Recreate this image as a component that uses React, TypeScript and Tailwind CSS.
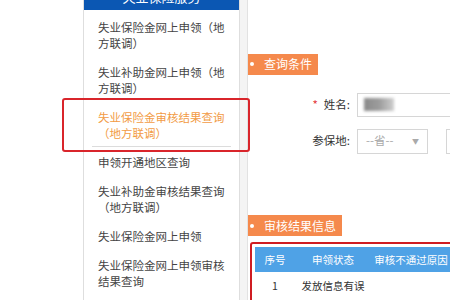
import React from 'react';

const menu = [
  '失业保险金网上申领（地方联调）',
  '失业补助金网上申领（地方联调）',
  '失业保险金审核结果查询（地方联调）',
  '申领开通地区查询',
  '失业补助金审核结果查询（地方联调）',
  '失业保险金网上申领',
  '失业保险金网上申领审核结果查询',
];

// orange section ribbon with the little fold under its left edge
function Ribbon({ label }: { label: string }) {
  return (
    <div className="relative ml-[-6px] inline-flex h-[21px] items-center bg-[#f5894c] pl-[8px] pr-[6px] text-[12px] text-white">
      <span className="h-[4px] w-[4px] rounded-full bg-white" />
      <span className="ml-[10px] leading-none">{label}</span>
      <span className="absolute left-0 top-full h-0 w-0 border-l-[6px] border-t-[5px] border-l-transparent border-t-[#c0683a]" />
    </div>
  );
}

export default function App() {
  return (
    <div
      className="relative flex h-[300px] w-[450px] overflow-hidden bg-white text-[#444]"
      style={{ fontFamily: '"Noto Sans CJK SC", "Noto Sans", sans-serif' }}
    >
      <div className="w-[83px] shrink-0 bg-white" />

      <aside className="w-[157px] shrink-0 border-x border-[#dedede] bg-white">
        {/* header is scrolled mostly out of view, only the glyph feet show */}
        <div className="h-[10px] overflow-hidden bg-[#0b57b3] text-center text-[13px] leading-[16px] text-white">
          <div className="mt-[-11px]">失业保险服务</div>
        </div>
        <ul className="mt-[2px]">
          {menu.map((item, i) => (
            <li key={item} className="text-[11.5px] leading-[16px]">
              <div
                className={
                  'pl-[14px] pr-[12px] pt-[7px] ' +
                  (i === 2 ? 'pb-[5px] text-[#f29b45]' : 'pb-[6px]')
                }
              >
                {item}
              </div>
              {i === 2 && <div className="mx-[8px] h-px bg-[#dcdcdc]" />}
            </li>
          ))}
        </ul>
      </aside>

      <div className="w-[7px] shrink-0 bg-[#f4f4f4]" />

      <main className="min-w-0 flex-1 overflow-hidden border-l border-[#e2e2e2] pt-[47px] text-[#333]">
        <Ribbon label="查询条件" />

        <div className="mt-[18px] flex h-[24px] items-center text-[11.5px]">
          <div className="w-[102px] shrink-0 text-right">
            <span className="mr-[6px] text-[#e4393c]">*</span>姓名:
          </div>
          <div className="ml-[7px] flex h-[24px] w-[140px] shrink-0 items-center border border-[#d6d6d6] pl-[6px]">
            <div className="h-[13px] w-[30px] bg-linear-to-r from-[#8a8a8a] via-[#9c9c9c] to-[#cfcfcf] blur-[1.5px]" />
          </div>
        </div>

        <div className="mt-[12px] flex h-[25px] items-center text-[11.5px]">
          <div className="w-[102px] shrink-0 text-right">参保地:</div>
          <div className="ml-[7px] flex h-[25px] w-[71px] shrink-0 items-center justify-between border border-[#d6d6d6] pl-[8px] pr-[8px] text-[#aaa]">
            <span>--省--</span>
            <span className="text-[7px]">▼</span>
          </div>
          <div className="ml-[18px] h-[25px] w-[60px] shrink-0 border border-[#d6d6d6]" />
        </div>

        <div className="mt-[55px]">
          <Ribbon label="审核结果信息" />
        </div>

        <div className="ml-[2px] mt-[6px] w-[260px] rounded-[3px] border-2 border-[#cf1c22] p-[3px] text-[10.5px]">
          <div className="flex h-[25px] items-center bg-[#4fa2e6] text-white">
            <div className="w-[40px] shrink-0 text-center">序号</div>
            <div className="w-[76px] shrink-0 text-center">申领状态</div>
            <div className="w-[80px] shrink-0 text-center">审核不通过原因</div>
            <div className="w-[60px] shrink-0 text-center">备注</div>
          </div>
          <div className="flex h-[29px] items-center border-b border-[#e6e6e6] text-[#333]">
            <div className="w-[40px] shrink-0 text-center">1</div>
            <div className="w-[76px] shrink-0 text-center">发放信息有误</div>
            <div className="w-[80px] shrink-0" />
          </div>
          <div className="h-[20px]" />
        </div>
      </main>

      {/* red annotation frame around the highlighted menu item */}
      <div className="pointer-events-none absolute left-[62px] top-[98px] h-[54px] w-[188px] rounded-[3px] border-2 border-[#d9252b]" />
    </div>
  );
}
